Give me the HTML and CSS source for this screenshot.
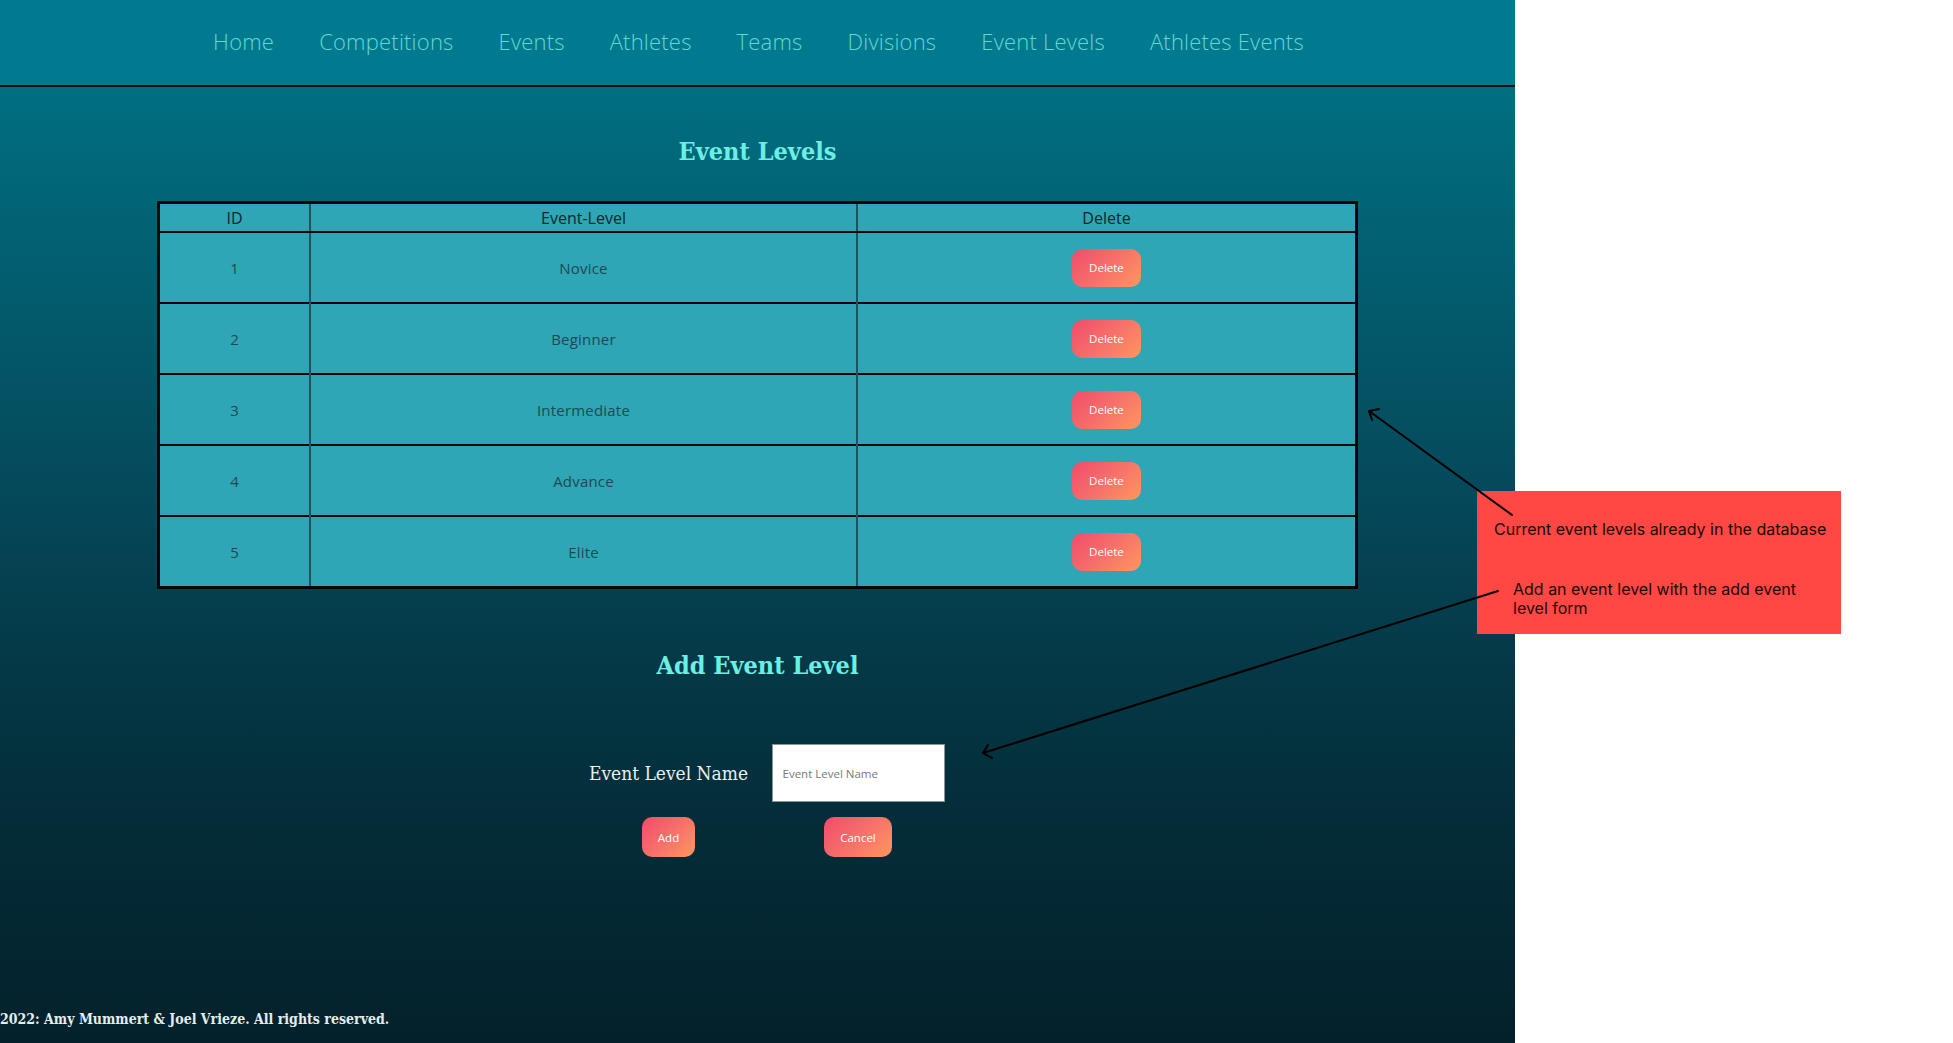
FILE: index.html
```html
<!DOCTYPE html>
<html lang="en">
<head>
<meta charset="utf-8">
<title>Event Levels</title>
<link rel="stylesheet" href="styles.css">
</head>
<body>
<div class="canvas">
  <div class="app">
    <nav class="topnav">
      <a class="navlink" href="#">Home</a>
      <a class="navlink" href="#">Competitions</a>
      <a class="navlink" href="#">Events</a>
      <a class="navlink" href="#">Athletes</a>
      <a class="navlink" href="#">Teams</a>
      <a class="navlink" href="#">Divisions</a>
      <a class="navlink" href="#">Event Levels</a>
      <a class="navlink" href="#">Athletes Events</a>
    </nav>
    <main class="content">
      <h1 class="title">Event Levels</h1>
      <table class="levels">
        <thead>
          <tr>
            <th class="col-id">ID</th>
            <th class="col-name">Event-Level</th>
            <th class="col-del">Delete</th>
          </tr>
        </thead>
        <tbody>
          <tr><td>1</td><td>Novice</td><td><button class="btn">Delete</button></td></tr>
          <tr><td>2</td><td>Beginner</td><td><button class="btn">Delete</button></td></tr>
          <tr><td>3</td><td>Intermediate</td><td><button class="btn">Delete</button></td></tr>
          <tr><td>4</td><td>Advance</td><td><button class="btn">Delete</button></td></tr>
          <tr><td>5</td><td>Elite</td><td><button class="btn">Delete</button></td></tr>
        </tbody>
      </table>
      <h2 class="title title-add">Add Event Level</h2>
      <form class="addform">
        <label class="formlabel" for="lvl">Event Level Name</label>
        <input class="forminput" id="lvl" type="text" placeholder="Event Level Name">
        <button class="btn btn-form" type="button">Add</button>
        <button class="btn btn-form" type="button">Cancel</button>
      </form>
    </main>
    <footer class="footer">2022: Amy Mummert &amp; Joel Vrieze. All rights reserved.</footer>
  </div>

  <div class="note">
    <p class="note-a">Current event levels already in the database</p>
    <p class="note-b">Add an event level with the add event level form</p>
  </div>

  <svg class="arrows" width="1953" height="1043" viewBox="0 0 1953 1043">
    <g stroke="#000" stroke-width="2" fill="none" stroke-linecap="round" stroke-linejoin="round">
      <line x1="1512" y1="515" x2="1369" y2="411"/>
      <polyline points="1379,409 1369,411 1372,420"/>
      <line x1="1498" y1="591" x2="983" y2="753"/>
      <polyline points="988,745 983,753 992,758"/>
    </g>
  </svg>
</div>
</body>
</html>
```

FILE: styles.css
```css
html, body {
  margin: 0;
  padding: 0;
  background: #ffffff;
}

.canvas {
  position: relative;
  width: 1953px;
  height: 1043px;
  overflow: hidden;
  background: #ffffff;
}

.app {
  width: 1515px;
  height: 1043px;
  display: flex;
  flex-direction: column;
  background: linear-gradient(180deg, #00788e 0%, #016b7d 12%, #035a6b 30%, #05485a 48%, #053a48 62%, #042d39 78%, #04212b 100%);
}

.topnav {
  height: 85px;
  flex: none;
  display: flex;
  align-items: center;
  justify-content: center;
  gap: 45px;
  background: #017a8f;
  border-bottom: 2px solid #061014;
  padding-left: 2px;
}

.navlink {
  font-family: "Open Sans", "Noto Sans", sans-serif;
  font-weight: 300;
  font-size: 22px;
  letter-spacing: 0.2px;
  color: #63d8d0;
  text-decoration: none;
  padding-bottom: 4px;
}

.content {
  display: flex;
  flex-direction: column;
  align-items: center;
}

.title {
  margin: 50px 0 0;
  font-family: "DejaVu Serif Condensed", "DejaVu Serif", serif;
  font-stretch: semi-condensed;
  font-weight: bold;
  font-size: 25px;
  line-height: 30px;
  color: #6cefe2;
  text-align: center;
}

.title-add {
  margin-top: 62px;
}

.levels {
  margin-top: 34px;
  width: 1201px;
  border-collapse: collapse;
  border: 3px solid #020607;
  background: #2ea6b6;
  font-family: "Open Sans", "Noto Sans", sans-serif;
  text-align: center;
}

.levels th {
  height: 27px;
  padding: 0;
  font-size: 16px;
  font-weight: 500;
  color: #0c262b;
  border-bottom: 2px solid #020607;
  border-left: 2px solid #1c5560;
}

.levels td {
  height: 69px;
  padding: 0;
  font-size: 15px;
  letter-spacing: 0.2px;
  color: #1d4a52;
  border-top: 2px solid #020607;
  border-left: 2px solid #1c5560;
}

.col-id { width: 150px; }
.col-name { width: 548px; }
.col-del { width: 500px; }

.btn {
  height: 38px;
  padding: 0 17px;
  border: none;
  border-radius: 10px;
  background: linear-gradient(135deg, #f14b6a 0%, #f6706a 50%, #ff975e 100%);
  color: #ffffff;
  font-family: "Open Sans", "Noto Sans", sans-serif;
  font-size: 11.5px;
  letter-spacing: 0;
  cursor: pointer;
}

.addform {
  margin-top: 63px;
  display: grid;
  grid-template-columns: 182px 197px;
  row-gap: 15px;
  align-items: center;
  justify-items: center;
  padding-left: 19px;
}

.formlabel {
  font-family: "DejaVu Serif Condensed", "DejaVu Serif", serif;
  font-stretch: semi-condensed;
  font-size: 19px;
  color: #e9f1f1;
}

.forminput {
  box-sizing: border-box;
  width: 173px;
  height: 58px;
  padding: 0 10px;
  border: 1px solid #8a9398;
  background: #ffffff;
  font-family: "Open Sans", "Noto Sans", sans-serif;
  font-size: 11.5px;
  color: #333;
}

.forminput::placeholder {
  color: #777;
}

.btn-form {
  height: 40px;
  padding: 0 16px;
}

.footer {
  margin-top: auto;
  padding: 0 0 14px;
  font-family: "DejaVu Serif Condensed", "DejaVu Serif", serif;
  font-stretch: semi-condensed;
  font-weight: bold;
  font-size: 14px;
  line-height: 20px;
  color: #e6ecec;
  white-space: nowrap;
}

.note {
  position: absolute;
  left: 1477px;
  top: 491px;
  width: 364px;
  height: 143px;
  box-sizing: border-box;
  padding-top: 29px;
  background: #ff4743;
  font-family: "Inter", "Noto Sans", sans-serif;
  font-size: 16px;
  line-height: 19px;
  color: #1e0707;
}

.note p {
  margin: 0;
}

.note-a {
  padding-left: 17px;
}

.note .note-b {
  margin-top: 41px;
  padding-left: 36px;
  width: 300px;
}

.arrows {
  position: absolute;
  left: 0;
  top: 0;
  pointer-events: none;
}
```
